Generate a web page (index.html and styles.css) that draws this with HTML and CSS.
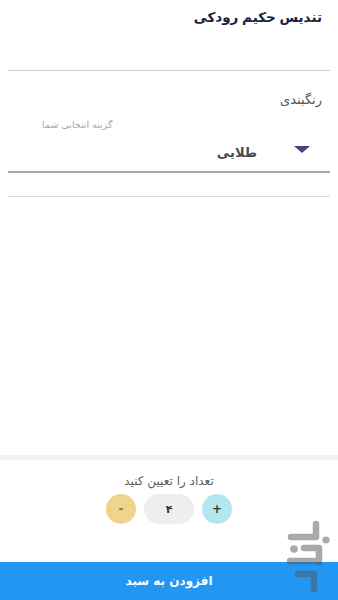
FILE: index.html
```html
<!DOCTYPE html>
<html lang="fa" dir="rtl">
<head>
<meta charset="utf-8">
<link rel="stylesheet" href="styles.css">
</head>
<body>
<div class="page">
  <div class="title">تندیس حکیم رودکی</div>
  <div class="field-empty"></div>
  <div class="label">رنگبندی</div>
  <div class="hint">گزینه انتخابی شما</div>
  <div class="select">
    <span class="caret"></span>
    <span class="value">طلایی</span>
  </div>
  <div class="field-line"></div>
  <div class="spacer"></div>
  <div class="qty">
    <div class="qty-label">تعداد را تعیین کنید</div>
    <div class="qty-row">
      <span class="btn plus">+</span>
      <span class="count">۴</span>
      <span class="btn minus">-</span>
    </div>
  </div>
  <div class="add">افزودن به سبد</div>
  <svg class="mark" width="48" height="76" viewBox="0 0 48 76">
    <g fill="none" stroke="#555" stroke-width="6.5" stroke-linecap="round" stroke-linejoin="round">
      <path d="M5 17 H30 V4"/>
      <path d="M18 28 H33 V42"/>
      <path d="M4 41 H30"/>
      <path d="M12 54 H28 V69"/>
    </g>
    <circle cx="40" cy="20" r="3.6" fill="#555"/>
    <circle cx="8" cy="29" r="3.8" fill="#555"/>
  </svg>
</div>
</body>
</html>
```
FILE: styles.css
```css
html, body {
  margin: 0;
  padding: 0;
  background: #fff;
}
body {
  font-family: "DejaVu Sans", "Noto Sans", sans-serif;
  direction: rtl;
}
.page {
  position: relative;
  width: 338px;
  height: 600px;
  display: flex;
  flex-direction: column;
  overflow: hidden;
}
.title {
  padding: 6px 16px 0 0;
  font-size: 13.5px;
  line-height: 22px;
  font-weight: bold;
  color: #1c2040;
  word-spacing: -1px;
}
.field-empty {
  height: 42px;
  margin: 0 8px;
  border-bottom: 1px solid #cfcfcf;
}
.label {
  margin-top: 19px;
  padding-right: 16px;
  font-size: 13px;
  line-height: 20px;
  color: #555;
}
.hint {
  margin-top: 8px;
  padding-left: 42px;
  text-align: left;
  font-size: 9.5px;
  line-height: 14px;
  color: #a5a5a5;
}
.select {
  display: flex;
  align-items: center;
  height: 41px;
  box-sizing: border-box;
  margin: 0 8px;
  padding: 2px 20px 0 0;
  border-bottom: 2px solid #a9a9a9;
}
.caret {
  width: 0;
  height: 0;
  border-left: 8px solid transparent;
  border-right: 8px solid transparent;
  border-top: 7px solid #4b3f80;
  margin-top: -6px;
}
.value {
  margin-right: 37px;
  font-size: 13px;
  font-weight: bold;
  color: #4a4a4a;
}
.field-line {
  height: 23px;
  margin: 0 8px;
  border-bottom: 1px solid #dcdcdc;
}
.spacer {
  flex: 1;
}
.qty {
  border-top: 5px solid #f3f3f3;
  padding-top: 13px;
  height: 107px;
  box-sizing: border-box;
  display: flex;
  flex-direction: column;
  align-items: center;
}
.qty-label {
  font-size: 12px;
  line-height: 16px;
  color: #5a5a5a;
}
.qty-row {
  display: flex;
  align-items: center;
  gap: 8px;
  margin-top: 5px;
}
.btn, .count {
  display: flex;
  align-items: center;
  justify-content: center;
  height: 30px;
  font-size: 12px;
  font-weight: bold;
  color: #333;
}
.btn {
  width: 30px;
  border-radius: 50%;
}
.plus {
  background: #b3e7ef;
}
.minus {
  background: #f1d48c;
  color: #777;
}
.count {
  width: 50px;
  border-radius: 15px;
  background: #eeeeee;
  font-size: 11px;
}
.add {
  height: 38px;
  background: #2196f3;
  color: #fff;
  font-size: 12px;
  font-weight: bold;
  display: flex;
  align-items: center;
  justify-content: center;
}
.mark {
  position: absolute;
  right: 4px;
  bottom: 4px;
  opacity: 0.5;
}
```
